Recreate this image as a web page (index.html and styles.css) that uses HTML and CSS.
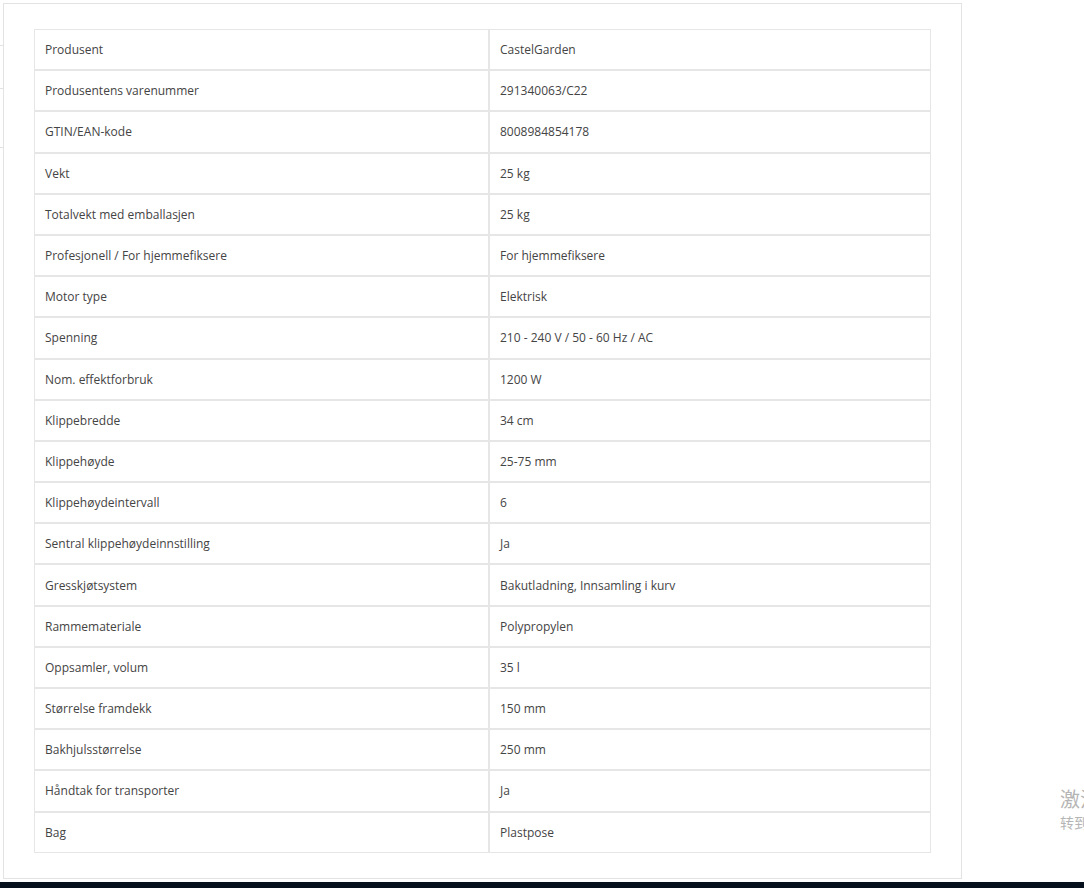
FILE: index.html
```html
<!DOCTYPE html>
<html lang="no">
<head>
    <meta charset="UTF-8">
    <meta name="viewport" content="width=device-width, initial-scale=1.0">
    <title>Spesifikasjoner</title>
    <link rel="stylesheet" href="styles.css">
</head>
<body>
    <div class="page">
        <div class="side-tabs">
            <div class="side-tab tab-1"></div>
            <div class="side-tab tab-2"></div>
            <div class="side-tab tab-3"></div>
        </div>

        <div class="spec-panel">
            <table class="spec-table">
                <tr><td class="spec-name">Produsent</td><td class="spec-value">CastelGarden</td></tr>
                <tr><td class="spec-name">Produsentens varenummer</td><td class="spec-value">291340063/C22</td></tr>
                <tr><td class="spec-name">GTIN/EAN-kode</td><td class="spec-value">8008984854178</td></tr>
                <tr><td class="spec-name">Vekt</td><td class="spec-value">25 kg</td></tr>
                <tr><td class="spec-name">Totalvekt med emballasjen</td><td class="spec-value">25 kg</td></tr>
                <tr><td class="spec-name">Profesjonell / For hjemmefiksere</td><td class="spec-value">For hjemmefiksere</td></tr>
                <tr><td class="spec-name">Motor type</td><td class="spec-value">Elektrisk</td></tr>
                <tr><td class="spec-name">Spenning</td><td class="spec-value">210 - 240 V / 50 - 60 Hz / AC</td></tr>
                <tr><td class="spec-name">Nom. effektforbruk</td><td class="spec-value">1200 W</td></tr>
                <tr><td class="spec-name">Klippebredde</td><td class="spec-value">34 cm</td></tr>
                <tr><td class="spec-name">Klippehøyde</td><td class="spec-value">25-75 mm</td></tr>
                <tr><td class="spec-name">Klippehøydeintervall</td><td class="spec-value">6</td></tr>
                <tr><td class="spec-name">Sentral klippehøydeinnstilling</td><td class="spec-value">Ja</td></tr>
                <tr><td class="spec-name">Gresskjøtsystem</td><td class="spec-value">Bakutladning, Innsamling i kurv</td></tr>
                <tr><td class="spec-name">Rammemateriale</td><td class="spec-value">Polypropylen</td></tr>
                <tr><td class="spec-name">Oppsamler, volum</td><td class="spec-value">35 l</td></tr>
                <tr><td class="spec-name">Størrelse framdekk</td><td class="spec-value">150 mm</td></tr>
                <tr><td class="spec-name">Bakhjulsstørrelse</td><td class="spec-value">250 mm</td></tr>
                <tr><td class="spec-name">Håndtak for transporter</td><td class="spec-value">Ja</td></tr>
                <tr><td class="spec-name">Bag</td><td class="spec-value">Plastpose</td></tr>
            </table>
        </div>
    </div>

    <div class="activate-note">
        <div class="activate-title">激活 Windows</div>
        <div class="activate-sub">转到“设置”以激活 Windows。</div>
    </div>

    <div class="taskbar"></div>
</body>
</html>
```

FILE: styles.css
```css
body {
    margin: 0;
    padding: 0;
    background-color: #fff;
    font-family: "Open Sans", "Liberation Sans", Arial, sans-serif;
    width: 1084px;
    height: 888px;
    overflow: hidden;
    display: flex;
    flex-direction: column;
}

.page {
    display: flex;
    height: 882px;
}

/* edge of the tab list behind the panel */
.side-tabs {
    width: 3px;
    display: flex;
    flex-direction: column;
}

.side-tab {
    border-bottom: 1px solid #e2e2e2;
}

.tab-1 { height: 45px; }
.tab-2 { height: 42px; }
.tab-3 { height: 58px; }

.spec-panel {
    box-sizing: border-box;
    margin-top: 3px;
    width: 959px;
    height: 876px;
    border: 1px solid #e3e3e3;
    padding: 25px 30px;
}

.spec-table {
    border-collapse: separate;
    border-spacing: 0;
    width: 897px;
    table-layout: fixed;
}

.spec-table td {
    box-sizing: border-box;
    height: 41.2px;
    padding: 0 10px;
    border: 1px solid #e6e6e6;
    font-size: 12px;
    color: #444;
    vertical-align: middle;
}

.spec-name {
    width: 455px;
}

.spec-value {
    width: 442px;
}

.activate-note {
    position: absolute;
    left: 1060px;
    top: 786px;
    color: #b5b5b5;
    font-family: "Noto Sans CJK SC", sans-serif;
    white-space: nowrap;
}

.activate-title {
    font-size: 20px;
    line-height: 26px;
}

.activate-sub {
    font-size: 14px;
    line-height: 20px;
}

.taskbar {
    height: 6px;
    background-color: #06101c;
}
```
